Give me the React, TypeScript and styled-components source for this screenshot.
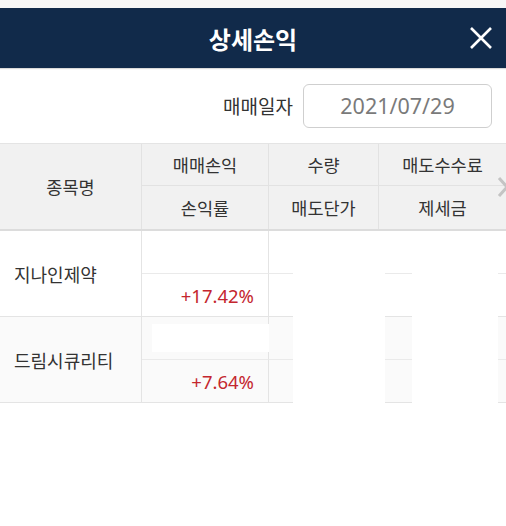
import React from 'react';
import styled, {createGlobalStyle} from 'styled-components';

interface StockRow {
    name: string;
    rate: string;
    masked: boolean;
}

const rows: StockRow[] = [
    {name: '지나인제약', rate: '+17.42%', masked: false},
    {name: '드림시큐리티', rate: '+7.64%', masked: true},
];

// right-hand part of the body: thin line strips and blank (hidden) columns
const strips: { width: number; blank: boolean }[] = [
    {width: 24, blank: false},
    {width: 92, blank: true},
    {width: 27, blank: false},
    {width: 86, blank: true},
    {width: 8, blank: false},
];

const GlobalStyle = createGlobalStyle`
    body {
        margin: 0;
        background: #fff;
        font-family: "Noto Sans", "Noto Sans CJK KR", sans-serif;
        color: #333;
    }
`;

const App: React.FC = () => {
    return (
        <Page>
            <GlobalStyle/>
            <TopStrip/>
            <Header>
                <span/>
                <Title>상세손익</Title>
                <CloseButton aria-label="닫기">
                    <svg width="24" height="24" viewBox="0 0 24 24">
                        <path d="M2 2 L22 22 M22 2 L2 22" stroke="#fff" strokeWidth="2.6" fill="none"/>
                    </svg>
                </CloseButton>
            </Header>
            <DateRow>
                <DateLabel>매매일자</DateLabel>
                <DateBox>2021/07/29</DateBox>
            </DateRow>
            <Table>
                <HeadRow>
                    <HeadName>종목명</HeadName>
                    <HeadCell>매매손익</HeadCell>
                    <HeadCell>수량</HeadCell>
                    <HeadCell $last>매도수수료</HeadCell>
                    <HeadCell $bottom>손익률</HeadCell>
                    <HeadCell $bottom>매도단가</HeadCell>
                    <HeadCell $bottom $last>제세금</HeadCell>
                    <MoreArrow>
                        <svg width="12" height="22" viewBox="0 0 12 22">
                            <path d="M2 2 L10 11 L2 20" stroke="#c4c4c4" strokeWidth="3" fill="none"/>
                        </svg>
                    </MoreArrow>
                </HeadRow>
                {rows.map(row => (
                    <BodyRow key={row.name} $shade={row.masked}>
                        <NameCell>{row.name}</NameCell>
                        <ValueColumn>
                            <Half $line>
                                {row.masked && <Mask/>}
                            </Half>
                            <Half>
                                <Rate>{row.rate}</Rate>
                            </Half>
                        </ValueColumn>
                        {strips.map((s, i) => s.blank ? (
                            <Blank key={i} style={{width: s.width}}/>
                        ) : (
                            <StripColumn key={i} style={{width: s.width}}>
                                <StripHalf $line/>
                                <StripHalf/>
                            </StripColumn>
                        ))}
                    </BodyRow>
                ))}
            </Table>
        </Page>
    );
};

const Page = styled.div`
    width: 506px;
    min-height: 526px;
    background: #fff;
    overflow: hidden;
`;

const TopStrip = styled.div`
    height: 8px;
    background: #f7f7f7;
`;

const Header = styled.div`
    height: 60px;
    background: #112a4a;
    display: grid;
    grid-template-columns: 1fr auto 1fr;
    align-items: center;
    box-shadow: 0 1px 1px rgba(0, 0, 0, 0.15);
`;

const Title = styled.h1`
    margin: 0;
    font-family: "Noto Sans CJK KR", sans-serif;
    font-size: 24px;
    font-weight: 700;
    color: #fff;
`;

const CloseButton = styled.button`
    justify-self: end;
    margin-right: 13px;
    padding: 0;
    width: 24px;
    height: 24px;
    border: none;
    background: none;
    display: flex;
    cursor: pointer;
`;

const DateRow = styled.div`
    height: 75px;
    display: flex;
    justify-content: flex-end;
    align-items: center;
    gap: 10px;
    padding-right: 14px;
`;

const DateLabel = styled.div`
    font-family: "Noto Sans CJK KR", sans-serif;
    font-size: 19px;
    color: #333;
`;

const DateBox = styled.div`
    width: 187px;
    height: 42px;
    border: 1px solid #cfcfcf;
    border-radius: 6px;
    display: flex;
    align-items: center;
    justify-content: center;
    font-family: "Noto Sans", sans-serif;
    font-size: 21.5px;
    color: #7a7a7a;
`;

const Table = styled.div`
    border-top: 1px solid #e4e4e4;
`;

const HeadRow = styled.div`
    position: relative;
    display: grid;
    grid-template-columns: 142px 127px 110px 1fr;
    grid-template-rows: 42px 43px;
    background: #f1f1f1;
    border-bottom: 2px solid #dcdcdc;
    font-family: "Noto Sans CJK KR", sans-serif;
    font-size: 17.5px;
    color: #333;
`;

const HeadName = styled.div`
    grid-row: 1 / 3;
    display: flex;
    align-items: center;
    justify-content: center;
    border-right: 1px solid #e2e2e2;
`;

const HeadCell = styled.div<{ $bottom?: boolean; $last?: boolean }>`
    display: flex;
    align-items: center;
    justify-content: center;
    border-right: ${p => p.$last ? 'none' : '1px solid #e2e2e2'};
    border-bottom: ${p => p.$bottom ? 'none' : '1px solid #e2e2e2'};
`;

const MoreArrow = styled.div`
    position: absolute;
    right: -3px;
    top: 32px;
    display: flex;
`;

const BodyRow = styled.div<{ $shade: boolean }>`
    display: flex;
    height: 86px;
    background: ${p => p.$shade ? '#fafafa' : '#fff'};
`;

const NameCell = styled.div`
    width: 127px;
    flex: none;
    display: flex;
    align-items: center;
    padding-left: 14px;
    border-right: 1px solid #e4e4e4;
    border-bottom: 1px solid #e4e4e4;
    font-family: "Noto Sans CJK KR", sans-serif;
    font-size: 18px;
    color: #333;
`;

const ValueColumn = styled.div`
    width: 127px;
    flex: none;
    display: flex;
    flex-direction: column;
    border-bottom: 1px solid #e4e4e4;
`;

const Half = styled.div<{ $line?: boolean }>`
    flex: 1;
    position: relative;
    display: flex;
    align-items: center;
    justify-content: flex-end;
    padding-right: 14px;
    border-right: 1px solid #e4e4e4;
    border-bottom: ${p => p.$line ? '1px solid #eaeaea' : 'none'};
`;

const Mask = styled.div`
    position: absolute;
    left: 10px;
    right: -1px;
    top: 7px;
    bottom: 7px;
    background: #fff;
`;

const Rate = styled.span`
    font-family: "Noto Sans", sans-serif;
    font-size: 18.5px;
    color: #c4262e;
`;

const StripColumn = styled.div`
    flex: none;
    display: flex;
    flex-direction: column;
    border-bottom: 1px solid #e4e4e4;
`;

const StripHalf = styled.div<{ $line?: boolean }>`
    flex: 1;
    border-bottom: ${p => p.$line ? '1px solid #eaeaea' : 'none'};
`;

const Blank = styled.div`
    flex: none;
    background: #fff;
`;

export default App;
